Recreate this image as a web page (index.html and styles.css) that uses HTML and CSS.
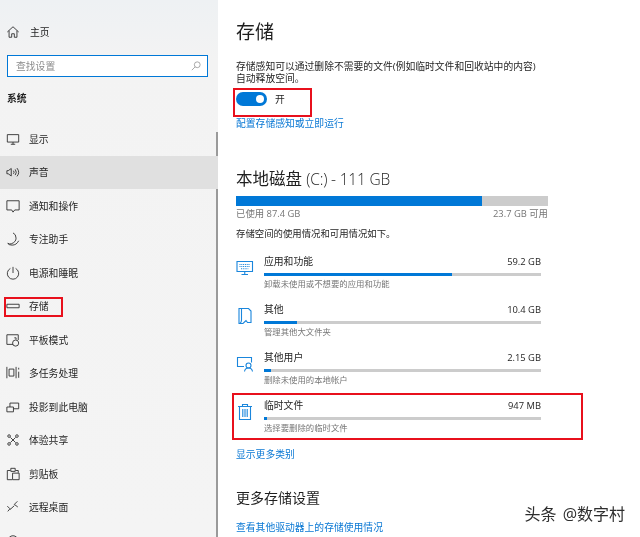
FILE: index.html
```html
<!DOCTYPE html>
<html lang="zh-CN">
<head>
<meta charset="utf-8">
<title>存储</title>
<link rel="stylesheet" href="styles.css">
</head>
<body>
<div class="window">
  <aside class="sidebar">
    <div class="scrollbar"></div>
    <div class="home">
      <svg class="icon" viewBox="0 0 16 16"><path d="M1.500 8 8 2l6.500 6M3.500 6.500V14h3v-4h3v4h3V6.500"/></svg>
      <span>主页</span>
    </div>
    <div class="search">
      <span class="placeholder">查找设置</span>
      <svg class="search-icon" viewBox="0 0 12 12"><circle cx="7.500" cy="4.500" r="3.500"/><path d="M5 7 1 11"/></svg>
    </div>
    <div class="section">系统</div>
    <nav class="nav">
      <div class="item"><svg class="icon" viewBox="0 0 16 16"><path d="M1.500 3h13v8.500h-13zM5.500 14h5M8 11.500V14"/></svg><span>显示</span></div>
      <div class="item active"><svg class="icon" viewBox="0 0 16 16"><path d="M1 6.500h1.500L6 4v8.500L2.500 10H1zM8.500 6.500q1.500 2 0 3.500M10.500 5q2.500 3.500 0 6.500M12.500 3.500q4 5 0 9.500"/></svg><span>声音</span></div>
      <div class="item"><svg class="icon" viewBox="0 0 16 16"><path d="M1 2h14v10.500H10L8 15l-1.500-2.500H1z"/></svg><span>通知和操作</span></div>
      <div class="item"><svg class="icon" viewBox="0 0 16 16"><path d="M8 1q3.500 1.500 3.500 6T6 13.500q-2 .5-4-.5 1.500 2 5 2 5 0 7.500-5"/></svg><span>专注助手</span></div>
      <div class="item"><svg class="icon" viewBox="0 0 16 16"><path d="M8 1v7M5 2.800a6.500 6.500 0 1 0 6 0"/></svg><span>电源和睡眠</span></div>
      <div class="item storage"><svg class="icon" viewBox="0 0 16 16"><path d="M1 6h14v4H1z"/></svg><span>存储</span></div>
      <div class="item"><svg class="icon" viewBox="0 0 16 16"><path d="M8 13H1V2h13v6M9.500 5.500h2v2"/><circle cx="11" cy="11.500" r="3.500"/></svg><span>平板模式</span></div>
      <div class="item"><svg class="icon" viewBox="0 0 16 16"><path d="M1 1v13M11.500 1v13M3.500 3.500h5.500v8H3.500zM14.500 2v2M14.500 6.500v7"/></svg><span>多任务处理</span></div>
      <div class="item"><svg class="icon" viewBox="0 0 16 16"><path d="M1 8h7.500v5.500H1zM4.500 8V3.500h10v6.500h-6"/></svg><span>投影到此电脑</span></div>
      <div class="item"><svg class="icon" viewBox="0 0 16 16"><circle cx="3.500" cy="3.500" r="1.500"/><circle cx="12.500" cy="3.500" r="1.500"/><circle cx="3.500" cy="12.500" r="1.500"/><circle cx="12.500" cy="12.500" r="1.500"/><path d="m5 5 6 6M11 5l-6 6"/></svg><span>体验共享</span></div>
      <div class="item"><svg class="icon" viewBox="0 0 16 16"><path d="M5 4H1.500v10.500H7M11 4h3v2.500M5.500 1.500h5V5h-5zM7.500 7H15v7.500H7.500z"/></svg><span>剪贴板</span></div>
      <div class="item"><svg class="icon" viewBox="0 0 16 16"><path d="m1.500 7 3 3L2 13M4.500 11l5-4.500M13 1.500 9.500 5l4 3"/></svg><span>远程桌面</span></div>
      <div class="item"><svg class="icon" viewBox="0 0 16 16"><circle cx="8" cy="8" r="6"/></svg></div>
    </nav>
  </aside>

  <main class="main">
    <h1 class="title">存储</h1>
    <p class="desc">存储感知可以通过删除不需要的文件(例如临时文件和回收站中的内容)<br>自动释放空间。</p>
    <div class="toggle-row">
      <span class="switch"><span class="knob"></span></span>
      <span>开</span>
    </div>
    <a class="link link-config">配置存储感知或立即运行</a>

    <h2 class="disk">本地磁盘 <span class="disk-latin">(C:) - 111 GB</span></h2>
    <div class="disk-bar"><div class="disk-used" style="width:78.8%"></div></div>
    <div class="disk-labels"><span>已使用 87.4 GB</span><span>23.7 GB 可用</span></div>
    <p class="usage">存储空间的使用情况和可用情况如下。</p>

    <div class="rows">
      <div class="row">
        <svg class="row-icon" viewBox="0 0 18 18"><path d="M1 2.500h15.500v10H1zM8.750 12.500v3M5.500 15.500h6.500"/><path class="keys" d="M3.500 5.500h10.500M3.500 7.500h10.500M5 9.800h7.500"/></svg>
        <div class="row-body">
          <div class="row-head"><span>应用和功能</span><span class="size">59.2 GB</span></div>
          <div class="bar"><div class="bar-fill" style="width:67.8%"></div></div>
          <div class="row-sub">卸载未使用或不想要的应用和功能</div>
        </div>
      </div>
      <div class="row">
        <svg class="row-icon" viewBox="0 0 18 18"><path d="M3 1.500h9.500L15 4v11.500h-3.500L10 13.500 7 16.500H3zM5.500 1.500V13q0 2-1.500 3.500"/></svg>
        <div class="row-body">
          <div class="row-head"><span>其他</span><span class="size">10.4 GB</span></div>
          <div class="bar"><div class="bar-fill" style="width:12%"></div></div>
          <div class="row-sub">管理其他大文件夹</div>
        </div>
      </div>
      <div class="row">
        <svg class="row-icon" viewBox="0 0 18 18"><path d="M8 11.500H1.500v-9h14v5"/><circle cx="12.500" cy="10.500" r="2.500"/><path d="M8.500 16.500q.5-3.500 4-3.500t4 3.500"/></svg>
        <div class="row-body">
          <div class="row-head"><span>其他用户</span><span class="size">2.15 GB</span></div>
          <div class="bar"><div class="bar-fill" style="width:2.6%"></div></div>
          <div class="row-sub">删除未使用的本地帐户</div>
        </div>
      </div>
      <div class="row temp">
        <svg class="row-icon" viewBox="0 0 18 18"><path d="M2 3.500h14M6.500 3.500V1.500h5v2M3.500 3.500v13h11v-13M6.800 6v8M9 6v8M11.200 6v8"/></svg>
        <div class="row-body">
          <div class="row-head"><span>临时文件</span><span class="size">947 MB</span></div>
          <div class="bar"><div class="bar-fill" style="width:1%"></div></div>
          <div class="row-sub">选择要删除的临时文件</div>
        </div>
      </div>
    </div>

    <a class="link">显示更多类别</a>
    <h3 class="more">更多存储设置</h3>
    <a class="link link-last">查看其他驱动器上的存储使用情况</a>
  </main>
  <div class="watermark">头条 @数字村</div>
</div>
</body>
</html>
```
FILE: styles.css
```css
*, *::after { box-sizing: border-box; margin: 0; padding: 0; }
html, body { width: 640px; height: 537px; overflow: hidden; background: #fff; }
body {
  font-family: "Open Sans", "Noto Sans CJK SC", sans-serif;
  font-size: 9.8px;
  color: #1f1f1f;
}
.window {
  position: relative;
  display: flex;
  width: 640px;
  height: 537px;
  overflow: hidden;
  filter: blur(0.3px);
}

/* Sidebar */
.sidebar {
  position: relative;
  flex: 0 0 218px;
  height: 537px;
  overflow: hidden;
  background: linear-gradient(180deg, #eef1f3 0, #f3f3f3 60px, #f4f4f4 100%);
}
.scrollbar {
  position: absolute;
  top: 132px;
  right: 0;
  bottom: 0;
  width: 2px;
  background: #9a9a9a;
}
.icon {
  flex: none;
  width: 14px;
  height: 14px;
  fill: none;
  stroke: #2b2b2b;
  stroke-width: 1;
}
.home {
  display: flex;
  align-items: center;
  gap: 10px;
  height: 16px;
  margin: 24px 0 0 6px;
}
.search {
  display: flex;
  align-items: center;
  justify-content: space-between;
  width: 201px;
  height: 22px;
  margin: 15px 0 0 7px;
  padding: 0 6px 0 8px;
  background: #fff;
  border: 1.5px solid #0078d7;
}
.placeholder { color: #8c8c8c; }
.search-icon {
  width: 10px;
  height: 10px;
  fill: none;
  stroke: #999;
  stroke-width: 1;
}
.section {
  margin: 15px 0 0 7px;
  height: 14px;
  line-height: 14px;
  font-weight: 700;
}
.nav {
  display: grid;
  grid-auto-rows: 33.5px;
  margin-top: 16px;
}
.item {
  position: relative;
  display: flex;
  align-items: center;
  gap: 9px;
  padding-left: 6px;
}
.item.active { background: #e0e0e0; }
.item.storage::after {
  content: "";
  position: absolute;
  left: 4px;
  top: 7.5px;
  width: 59px;
  height: 20px;
  border: 2px solid #e8101c;
}

/* Main */
.main {
  flex: 1;
  padding-left: 18px;
}
.title {
  margin-top: 21px;
  height: 24px;
  line-height: 22px;
  font-size: 19px;
  font-weight: 400;
}
.desc {
  margin-top: 16px;
  line-height: 12px;
}
.toggle-row {
  position: relative;
  display: flex;
  align-items: center;
  gap: 8px;
  height: 13px;
  margin-top: 7px;
}
.toggle-row::after {
  content: "";
  position: absolute;
  left: -3px;
  top: -4px;
  width: 79px;
  height: 29px;
  border: 2px solid #e8101c;
}
.switch {
  display: flex;
  align-items: center;
  justify-content: flex-end;
  width: 31px;
  height: 14px;
  padding-right: 3px;
  border-radius: 7px;
  background: #0078d7;
}
.knob {
  width: 8px;
  height: 8px;
  border-radius: 50%;
  background: #fff;
}
.link {
  display: block;
  height: 14px;
  line-height: 14px;
  color: #0a78d4;
}
.link-config { margin-top: 12px; }
.disk {
  margin-top: 37px;
  height: 24px;
  line-height: 22px;
  font-size: 16.5px;
  font-weight: 400;
}
.disk-latin {
  font-size: 15.5px;
  font-weight: 300;
  letter-spacing: -0.2px;
}
.disk-bar {
  width: 312px;
  height: 10px;
  margin-top: 4px;
  background: #cccccc;
}
.disk-used { height: 100%; background: #0078d7; }
.disk-labels {
  display: flex;
  justify-content: space-between;
  width: 312px;
  margin-top: 2px;
  font-size: 9.4px;
  line-height: 12px;
  color: #767676;
}
.usage {
  margin-top: 8px;
  font-size: 9.4px;
  line-height: 12px;
}
.rows {
  display: grid;
  grid-auto-rows: 34px;
  row-gap: 14px;
  margin: 16px 0 14px;
}
.row {
  position: relative;
  display: flex;
  align-items: flex-start;
  gap: 10px;
  width: 305px;
}
.row-icon {
  flex: none;
  width: 18px;
  height: 18px;
  margin-top: 3px;
  fill: none;
  stroke: #1a86dc;
  stroke-width: 1.1;
}
.keys { stroke-dasharray: 1 0.8; }
.row-body { flex: 1; }
.row-head {
  display: flex;
  justify-content: space-between;
  line-height: 12px;
  color: #1f1f1f;
}
.size { font-size: 9.4px; }
.bar {
  height: 3px;
  margin-top: 5px;
  background: #cccccc;
}
.bar-fill { height: 100%; background: #0078d7; }
.row-sub {
  margin-top: 2px;
  font-size: 8.4px;
  line-height: 12px;
  color: #767676;
}
.temp::after {
  content: "";
  position: absolute;
  left: -4px;
  top: -7px;
  width: 351px;
  height: 47px;
  border: 2px solid #e8101c;
}
.more {
  margin-top: 26px;
  height: 20px;
  line-height: 20px;
  font-size: 14px;
  font-weight: 400;
}
.link-last { margin-top: 13px; }
.watermark {
  position: absolute;
  right: 15px;
  bottom: 14px;
  font-size: 16px;
  line-height: 18px;
  word-spacing: 2px;
  color: #2e2e2e;
  text-shadow: 0 0 3px #fff;
}
```
